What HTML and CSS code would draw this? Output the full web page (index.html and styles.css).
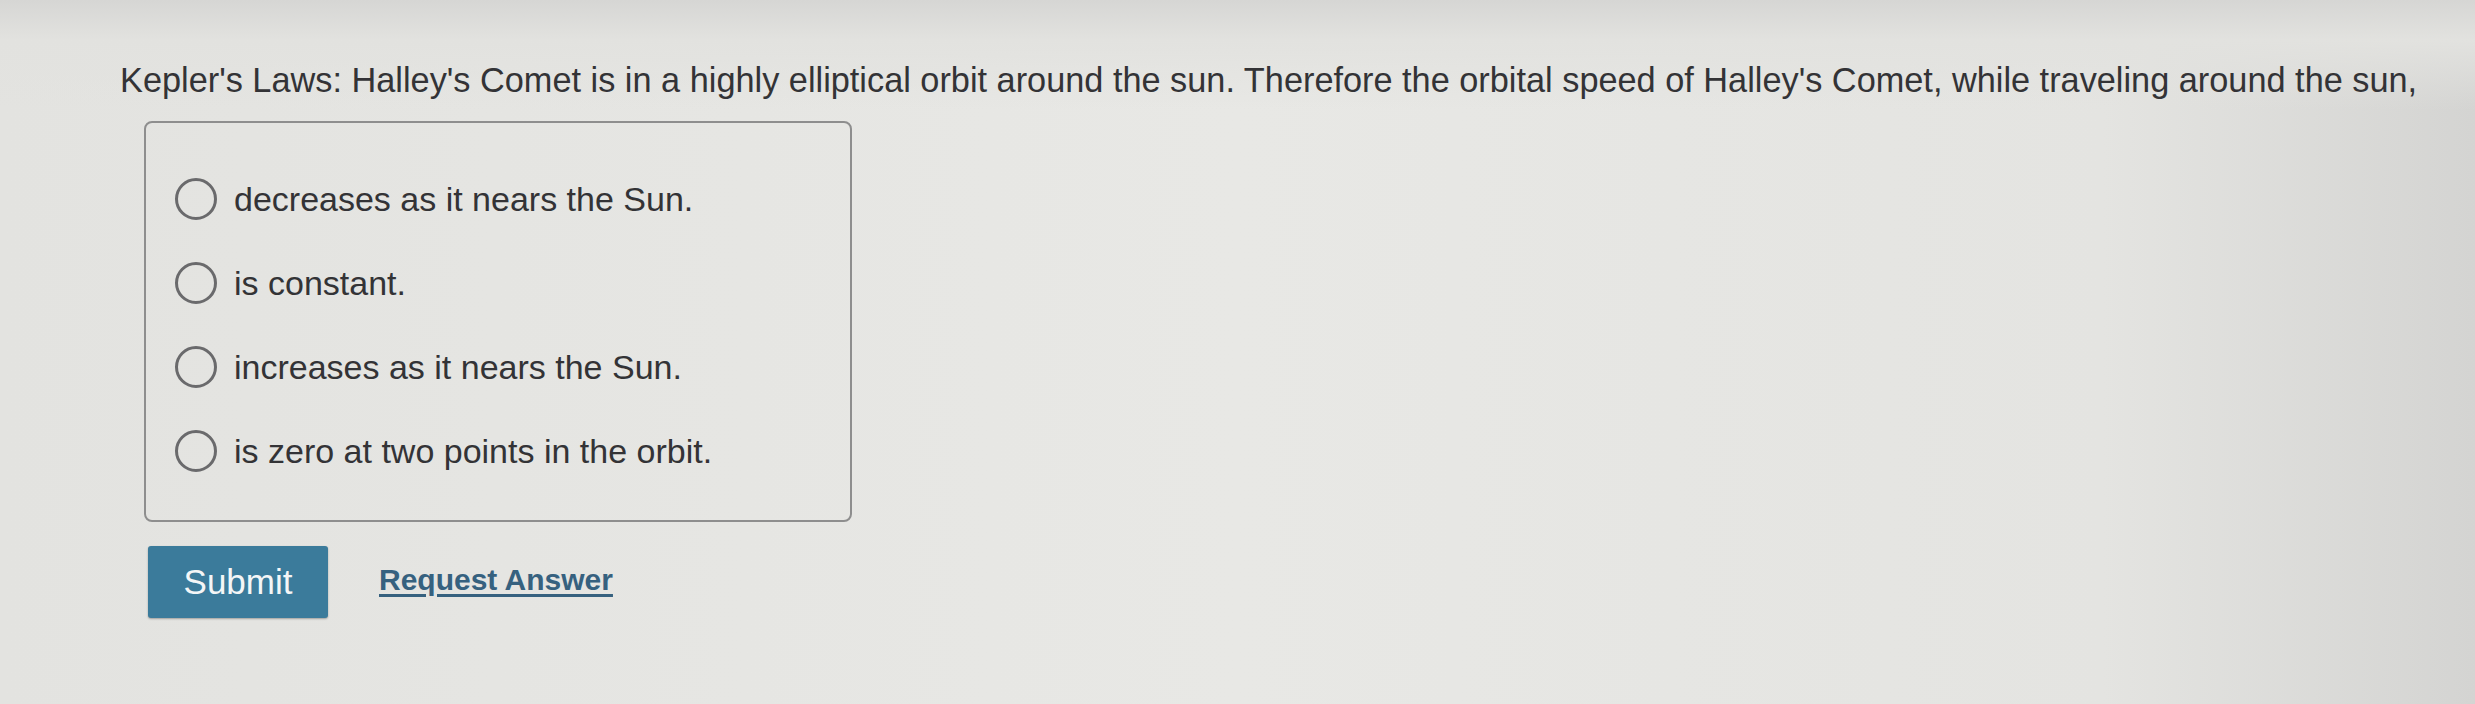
FILE: index.html
```html
<!DOCTYPE html>
<html>
<head>
<meta charset="utf-8">
<link rel="stylesheet" href="styles.css">
</head>
<body>
<div class="page">
  <p class="question">Kepler's Laws: Halley's Comet is in a highly elliptical orbit around the sun. Therefore the orbital speed of Halley's Comet, while traveling around the sun,</p>
  <div class="choices">
    <label class="choice"><span class="radio"></span><span class="label">decreases as it nears the Sun.</span></label>
    <label class="choice"><span class="radio"></span><span class="label">is constant.</span></label>
    <label class="choice"><span class="radio"></span><span class="label">increases as it nears the Sun.</span></label>
    <label class="choice"><span class="radio"></span><span class="label">is zero at two points in the orbit.</span></label>
  </div>
  <div class="actions">
    <button class="submit">Submit</button>
    <a class="request" href="#">Request Answer</a>
  </div>
</div>
</body>
</html>
```

FILE: styles.css
```css
html, body {
  margin: 0;
  padding: 0;
}
body {
  width: 2475px;
  height: 704px;
  overflow: hidden;
  font-family: "Liberation Sans", Arial, sans-serif;
  color: #333336;
  background:
    linear-gradient(to bottom, #d6d6d4 0px, #e2e2df 40px, rgba(230,230,227,0) 110px),
    linear-gradient(to right, #e3e3e0 0%, #e8e8e5 50%, #e4e4e1 85%, #d4d4d2 100%);
}
.page {
  padding: 60px 0 0 120px;
}
.question {
  margin: 0;
  font-size: 34.3px;
  line-height: 40px;
  white-space: nowrap;
}
.choices {
  margin: 21px 0 0 24px;
  border: 2px solid #8e8e8e;
  border-radius: 8px;
  padding: 34px 0 0 29px;
  box-sizing: content-box;
  display: flex;
  flex-direction: column;
  width: 675px;
  height: 363px;
}
.choice {
  display: flex;
  align-items: center;
  height: 84px;
  gap: 17px;
}
.radio {
  width: 36px;
  height: 36px;
  border: 3px solid #6a6a6c;
  border-radius: 50%;
  flex: none;
}
.label {
  font-size: 34px;
}
.actions {
  display: flex;
  align-items: center;
  gap: 51px;
  margin: 24px 0 0 28px;
}
.submit {
  width: 180px;
  height: 72px;
  background: #3b7b9b;
  border: none;
  border-radius: 3px;
  color: #f4f6f7;
  font-family: "Liberation Sans", Arial, sans-serif;
  font-size: 35px;
  padding: 0;
  box-shadow: 0 1px 2px rgba(0,0,0,0.3);
}
.request {
  font-size: 30px;
  font-weight: bold;
  color: #36617f;
  text-decoration: underline;
  text-decoration-thickness: 3px;
  text-underline-offset: 4px;
  margin-top: -4px;
}
```
